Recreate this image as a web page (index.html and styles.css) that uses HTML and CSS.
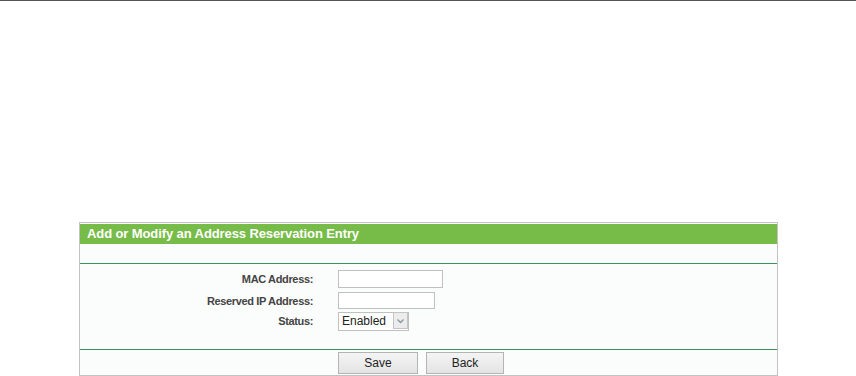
FILE: index.html
```html
<!DOCTYPE html>
<html>
<head>
<meta charset="utf-8">
<title>Address Reservation</title>
<link rel="stylesheet" href="styles.css">
</head>
<body>
<div class="topline"></div>
<main class="content">
  <section class="panel">
    <h1 class="panel-title">Add or Modify an Address Reservation Entry</h1>
    <div class="panel-band"></div>
    <form class="panel-form">
      <div class="row row-1">
        <label class="label" for="mac">MAC Address:</label>
        <div class="field"><input id="mac" class="input input-mac" type="text"></div>
      </div>
      <div class="row row-2">
        <label class="label" for="ip">Reserved IP Address:</label>
        <div class="field"><input id="ip" class="input input-ip" type="text"></div>
      </div>
      <div class="row row-3">
        <label class="label" for="status">Status:</label>
        <div class="field">
          <span class="select-wrap">
            <select id="status" class="select">
              <option>Enabled</option>
              <option>Disabled</option>
            </select>
            <span class="select-arrow"><svg width="9" height="6" viewBox="0 0 9 6"><polyline points="1.5,1.5 4.5,4.5 7.5,1.5" fill="none" stroke="#8a93a6" stroke-width="1.3"/></svg></span>
          </span>
        </div>
      </div>
    </form>
    <div class="panel-actions">
      <div class="actions-spacer"></div>
      <div class="actions-buttons">
        <button type="button" class="btn btn-save">Save</button>
        <button type="button" class="btn btn-back">Back</button>
      </div>
    </div>
  </section>
</main>
</body>
</html>
```

FILE: styles.css
```css
html, body {
  margin: 0;
  padding: 0;
  background: #ffffff;
  font-family: "Liberation Sans", Arial, sans-serif;
}

.topline {
  height: 1px;
  background: #555555;
}

.content {
  padding: 221px 0 0 79px;
}

.panel {
  width: 699px;
  box-sizing: border-box;
  border: 1px solid #c2c2c2;
  padding-top: 1px;
  background: #ffffff;
}

.panel-title {
  margin: 0;
  height: 20px;
  line-height: 20px;
  background: #77bb48;
  color: #ffffff;
  font-size: 13px;
  font-weight: bold;
  padding-left: 7px;
  letter-spacing: -0.1px;
}

.panel-band {
  height: 19px;
  background: #fbfcfc;
  border-bottom: 1px solid #3a915a;
}

.panel-form {
  margin: 0;
  background: #fbfcfc;
  padding: 6px 0 19px 0;
  border-bottom: 1px solid #3a915a;
}

.row {
  display: grid;
  grid-template-columns: 233px 1fr;
  column-gap: 25px;
  align-items: center;
}

.row-2 { margin-top: 4px; }
.row-3 { margin-top: 2px; }

.label {
  text-align: right;
  font-size: 11px;
  font-weight: bold;
  letter-spacing: -0.35px;
  color: #444444;
}

.field {
  display: flex;
  align-items: center;
}

.input {
  box-sizing: border-box;
  margin: 0;
  padding: 0 3px;
  border: 1px solid #c0c0c0;
  background: #ffffff;
  font-family: "Liberation Sans", Arial, sans-serif;
  font-size: 12px;
  outline: none;
}

.input-mac { width: 105px; height: 18px; }
.input-ip { width: 97px; height: 17px; }

.select-wrap {
  position: relative;
  display: inline-block;
  width: 71px;
  height: 19px;
}

.select {
  -webkit-appearance: none;
  appearance: none;
  box-sizing: border-box;
  width: 71px;
  height: 19px;
  margin: 0;
  padding: 0 0 0 3px;
  border: 1px solid #c0c0c0;
  border-radius: 0;
  background: #ffffff;
  font-family: "Liberation Sans", Arial, sans-serif;
  font-size: 12px;
  color: #222222;
  outline: none;
}

.select-arrow {
  position: absolute;
  top: 1px;
  right: 1px;
  width: 15px;
  height: 17px;
  box-sizing: border-box;
  border: 1px solid #c4c4c4;
  background: #ececec;
  display: flex;
  align-items: center;
  justify-content: center;
  pointer-events: none;
}

.panel-actions {
  display: grid;
  grid-template-columns: 233px 1fr;
  column-gap: 25px;
  background: #fbfcfc;
  padding: 2px 0 1px 0;
}

.actions-buttons {
  display: flex;
  gap: 8px;
}

.btn {
  box-sizing: border-box;
  height: 22px;
  margin: 0;
  padding: 0;
  border: 1px solid #b4b4b4;
  border-radius: 0;
  background: linear-gradient(#f4f4f4, #e4e4e4);
  font-family: "Liberation Sans", Arial, sans-serif;
  font-size: 12px;
  color: #222222;
}

.btn-save { width: 80px; }
.btn-back { width: 78px; }
```
